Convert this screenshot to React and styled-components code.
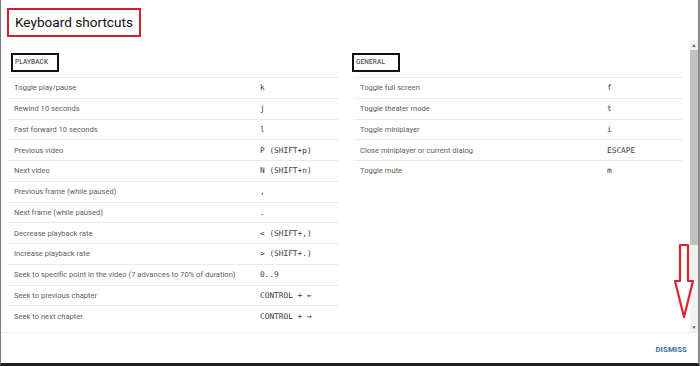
import React from "react";
import styled, { createGlobalStyle } from "styled-components";

const Global = createGlobalStyle`
  html, body {
    margin: 0;
    padding: 0;
    background: #fff;
  }
  body {
    font-family: Roboto, "Liberation Sans", Arial, sans-serif;
  }
`;

const Frame = styled.div`
  position: relative;
  width: 700px;
  height: 366px;
  box-sizing: border-box;
  background: #fff;
  border-left: 1px solid #7c7c7c;
  border-right: 2px solid #8a8a8a;
  border-bottom: 3px solid #1f1f1f;
  display: flex;
  flex-direction: column;
  overflow: hidden;
`;

const Header = styled.header`
  height: 40px;
  box-sizing: border-box;
  padding: 8px 0 0 6px;
`;

const Title = styled.h1`
  display: inline-block;
  box-sizing: border-box;
  height: 29px;
  margin: 0;
  padding: 0 6px;
  border: 2px solid #d01f2b;
  font-size: 13.6px;
  font-weight: 400;
  line-height: 25px;
  color: #111;
`;

const Body = styled.div`
  flex: 1;
  display: flex;
  min-height: 0;
`;

const Content = styled.div`
  flex: 1;
  display: grid;
  grid-template-columns: 330px 328px;
  column-gap: 16px;
  align-items: start;
  padding: 13px 0 0 7px;
`;

const Section = styled.section`
  display: flex;
  flex-direction: column;
`;

const SectionTitle = styled.h2`
  box-sizing: border-box;
  width: 48px;
  height: 19px;
  margin: 0 0 5px ${p => p.$offset}px;
  padding-left: 2px;
  border: 2px solid #111;
  font-size: 6.5px;
  font-weight: 500;
  line-height: 15px;
  color: #555;
  letter-spacing: 0.1px;
`;

const Row = styled.div`
  display: grid;
  grid-template-columns: ${p => p.$keyAt}px 1fr;
  align-items: center;
  height: 20.75px;
  box-sizing: border-box;
  border-top: 1px solid #ebebeb;
  padding-left: 6px;
`;

const Label = styled.span`
  font-size: 7.6px;
  color: #5e5e5e;
`;

const Key = styled.span`
  font-family: "DejaVu Sans Mono", "Liberation Mono", monospace;
  font-size: 7.8px;
  color: #3a3a3a;
  white-space: pre;
`;

const Scrollbar = styled.div`
  width: 9px;
  display: flex;
  flex-direction: column;
  align-items: center;
  background: #f1f1f1;
  margin-left: 8px;
`;

const ArrowBtn = styled.div`
  height: 10px;
  width: 100%;
  display: flex;
  align-items: center;
  justify-content: center;
  font-size: 5px;
  color: #555;
`;

const Thumb = styled.div`
  width: 8px;
  height: 195px;
  background: #c1c1c1;
`;

const Spacer = styled.div`
  flex: 1;
`;

const Footer = styled.footer`
  height: 30px;
  border-top: 1px solid #efefef;
  display: flex;
  align-items: center;
  justify-content: flex-end;
  padding-right: 11px;
`;

const Dismiss = styled.button`
  border: 0;
  background: none;
  padding: 0;
  font-family: Roboto, "Liberation Sans", sans-serif;
  font-size: 7.8px;
  font-weight: 700;
  color: #3d6ca3;
  letter-spacing: 0.1px;
  margin-top: 2px;
`;

const Annotation = styled.svg`
  position: absolute;
  left: 671px;
  top: 242px;
`;

const playback = [
  ["Toggle play/pause", "k"],
  ["Rewind 10 seconds", "j"],
  ["Fast forward 10 seconds", "l"],
  ["Previous video", "P (SHIFT+p)"],
  ["Next video", "N (SHIFT+n)"],
  ["Previous frame (while paused)", ","],
  ["Next frame (while paused)", "."],
  ["Decrease playback rate", "< (SHIFT+,)"],
  ["Increase playback rate", "> (SHIFT+.)"],
  ["Seek to specific point in the video (7 advances to 70% of duration)", "0..9"],
  ["Seek to previous chapter", "CONTROL + ←"],
  ["Seek to next chapter", "CONTROL + →"],
];

const general = [
  ["Toggle full screen", "f"],
  ["Toggle theater mode", "t"],
  ["Toggle miniplayer", "i"],
  ["Close miniplayer or current dialog", "ESCAPE"],
  ["Toggle mute", "m"],
];

const Shortcuts = ({ title, items, keyAt, offset }) => (
  <Section>
    <SectionTitle $offset={offset}>{title}</SectionTitle>
    {items.map(([label, key]) => (
      <Row key={label} $keyAt={keyAt}>
        <Label>{label}</Label>
        <Key>{key}</Key>
      </Row>
    ))}
  </Section>
);

const App = () => (
  <Frame>
    <Global />
    <Header>
      <Title>Keyboard shortcuts</Title>
    </Header>
    <Body>
      <Content>
        <Shortcuts title="PLAYBACK" items={playback} keyAt={246} offset={3} />
        <Shortcuts title="GENERAL" items={general} keyAt={247} offset={-2} />
      </Content>
      <Scrollbar>
        <ArrowBtn>▲</ArrowBtn>
        <Thumb />
        <Spacer />
        <ArrowBtn>▼</ArrowBtn>
      </Scrollbar>
    </Body>
    <Footer>
      <Dismiss>DISMISS</Dismiss>
    </Footer>
    <Annotation width="24" height="80" viewBox="0 0 24 80">
      <path
        d="M8 3 L16 3 L16 39 L21 39 L12 75 L3 39 L8 39 Z"
        fill="none"
        stroke="#d8232a"
        strokeWidth="2.2"
        strokeLinejoin="round"
      />
    </Annotation>
  </Frame>
);

export default App;
